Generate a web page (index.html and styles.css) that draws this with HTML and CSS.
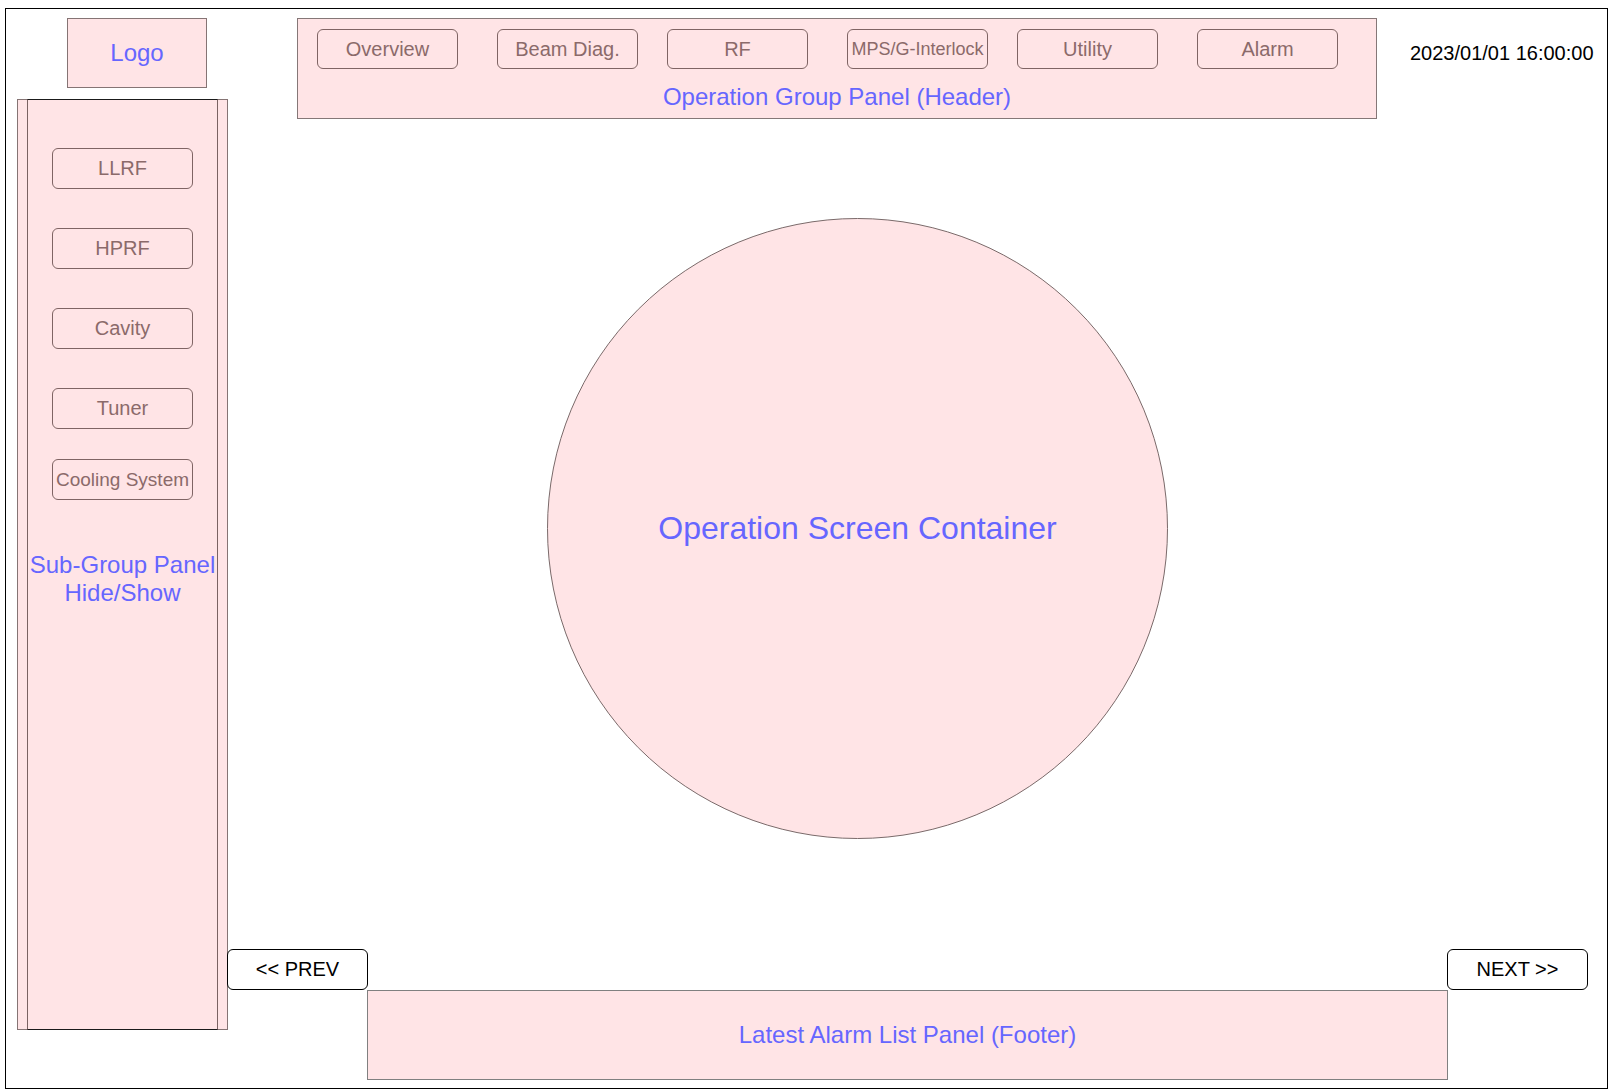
FILE: index.html
```html
<!DOCTYPE html>
<html>
<head>
<meta charset="utf-8">
<link rel="stylesheet" href="styles.css">
</head>
<body>
<div class="frame">
  <div class="left">
    <div class="logo">Logo</div>
    <div class="sidebar">
      <div class="sidebar-inner">
        <div class="sbtn">LLRF</div>
        <div class="sbtn">HPRF</div>
        <div class="sbtn">Cavity</div>
        <div class="sbtn">Tuner</div>
        <div class="sbtn sbtn-cool">Cooling System</div>
        <div class="side-label">Sub-Group Panel<br>Hide/Show</div>
      </div>
    </div>
  </div>
  <div class="right">
    <div class="top">
      <div class="header">
        <div class="hbtns">
          <div class="hbtn">Overview</div>
          <div class="hbtn">Beam Diag.</div>
          <div class="hbtn">RF</div>
          <div class="hbtn hbtn-small">MPS/G-Interlock</div>
          <div class="hbtn">Utility</div>
          <div class="hbtn">Alarm</div>
        </div>
        <div class="header-label">Operation Group Panel (Header)</div>
      </div>
      <div class="date">2023/01/01 16:00:00</div>
    </div>
    <div class="circle">Operation Screen Container</div>
    <div class="bottom">
      <div class="navbtn">&lt;&lt; PREV</div>
      <div class="footer">Latest Alarm List Panel (Footer)</div>
      <div class="navbtn">NEXT &gt;&gt;</div>
    </div>
  </div>
</div>
</body>
</html>
```
FILE: styles.css
```css
html, body {
  margin: 0;
  padding: 0;
  background: #ffffff;
}
body {
  font-family: "Liberation Sans", Arial, sans-serif;
}
.frame {
  box-sizing: border-box;
  margin: 8px 0 0 5px;
  width: 1603px;
  height: 1081px;
  border: 1px solid #000000;
  padding: 9px 0 0 11px;
  display: flex;
  align-items: flex-start;
}
.left {
  width: 210px;
  display: flex;
  flex-direction: column;
  flex: none;
}
.logo {
  box-sizing: border-box;
  margin-left: 50px;
  width: 140px;
  height: 70px;
  background: #ffe4e6;
  border: 1px solid #857474;
  color: #6666ff;
  font-size: 24px;
  display: flex;
  align-items: center;
  justify-content: center;
}
.sidebar {
  box-sizing: border-box;
  margin-top: 11px;
  width: 211px;
  height: 931px;
  background: #ffe4e6;
  border: 1px solid #857474;
  padding: 0 9px;
  display: flex;
}
.sidebar-inner {
  box-sizing: border-box;
  margin: -1px 0;
  width: 191px;
  height: 931px;
  border-left: 1px solid #7a6262;
  border-right: 1px solid #7a6262;
  border-top: 1px solid #1a1a1a;
  border-bottom: 1px solid #1a1a1a;
  padding-top: 48px;
  display: flex;
  flex-direction: column;
  align-items: center;
}
.sbtn {
  box-sizing: border-box;
  width: 141px;
  height: 41px;
  margin-bottom: 39px;
  border: 1px solid #7f6464;
  border-radius: 6px;
  color: #8b6a6a;
  font-size: 20px;
  display: flex;
  align-items: center;
  justify-content: center;
  flex: none;
}
.sbtn:nth-child(4) {
  margin-bottom: 30px;
}
.sbtn-cool {
  font-size: 19px;
  white-space: nowrap;
  margin-bottom: 51px;
}
.side-label {
  color: #6666ff;
  font-size: 24px;
  line-height: 28px;
  text-align: center;
  white-space: nowrap;
}
.right {
  flex: 1;
  display: flex;
  flex-direction: column;
}
.top {
  display: flex;
  align-items: flex-start;
}
.header {
  box-sizing: border-box;
  margin-left: 70px;
  width: 1080px;
  height: 101px;
  background: #ffe4e6;
  border: 1px solid #857777;
  padding: 10px 0 0 19px;
  display: flex;
  flex-direction: column;
}
.hbtns {
  display: flex;
}
.hbtn {
  box-sizing: border-box;
  width: 141px;
  height: 40px;
  border: 1px solid #7f6464;
  border-radius: 6px;
  color: #8b6a6a;
  font-size: 20px;
  display: flex;
  align-items: center;
  justify-content: center;
  white-space: nowrap;
  flex: none;
}
.hbtn:nth-child(odd) {
  margin-right: 39px;
}
.hbtn:nth-child(even) {
  margin-right: 29px;
}
.hbtn-small {
  font-size: 18px;
}
.header-label {
  margin-top: 14px;
  margin-left: -19px;
  color: #6666ff;
  font-size: 24px;
  line-height: 28px;
  text-align: center;
}
.date {
  margin-left: 33px;
  margin-top: 24px;
  font-size: 20px;
  line-height: 23px;
  color: #000000;
  white-space: nowrap;
}
.circle {
  box-sizing: border-box;
  margin-left: 320px;
  margin-top: 99px;
  width: 621px;
  height: 621px;
  border-radius: 50%;
  border: 1px solid #7a6a6a;
  background: #ffe4e6;
  color: #6666ff;
  font-size: 32px;
  display: flex;
  align-items: center;
  justify-content: center;
}
.bottom {
  margin-top: 110px;
  display: flex;
  align-items: flex-start;
}
.navbtn {
  box-sizing: border-box;
  width: 141px;
  height: 41px;
  border: 1px solid #000000;
  border-radius: 6px;
  background: #ffffff;
  color: #000000;
  font-size: 20px;
  display: flex;
  align-items: center;
  justify-content: center;
  white-space: nowrap;
  flex: none;
}
.footer {
  box-sizing: border-box;
  margin-top: 41px;
  margin-left: -1px;
  margin-right: -1px;
  width: 1081px;
  height: 90px;
  background: #ffe4e6;
  border: 1px solid #808080;
  color: #6666ff;
  font-size: 24px;
  display: flex;
  align-items: center;
  justify-content: center;
  flex: none;
}
```
